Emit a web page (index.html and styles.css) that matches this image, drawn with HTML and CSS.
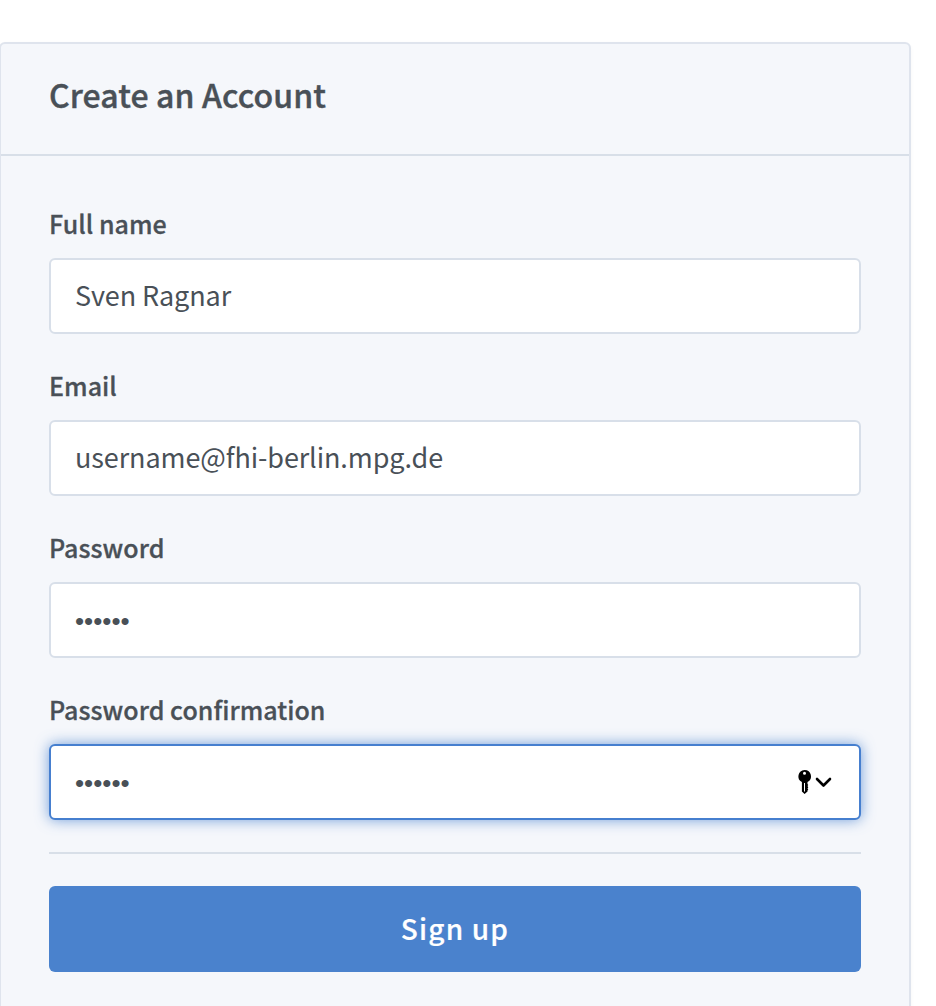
FILE: index.html
```html
<!DOCTYPE html>
<html lang="en">
<head>
    <meta charset="UTF-8">
    <meta name="viewport" content="width=device-width, initial-scale=1.0">
    <title>Create an Account</title>
    <link rel="stylesheet" href="styles.css">
</head>
<body>
    <div class="card">
        <div class="card-header">
            <h1>Create an Account</h1>
        </div>
        <form class="card-body">
            <div class="form-group">
                <label for="name">Full name</label>
                <input type="text" id="name" value="Sven Ragnar">
            </div>

            <div class="form-group">
                <label for="email">Email</label>
                <input type="text" id="email" value="username@fhi-berlin.mpg.de">
            </div>

            <div class="form-group">
                <label for="password">Password</label>
                <input type="password" id="password" value="secret">
            </div>

            <div class="form-group">
                <label for="confirmation">Password confirmation</label>
                <div class="input-wrap">
                    <input class="focused" type="password" id="confirmation" value="secret">
                    <svg class="key-icon" width="36" height="26" viewBox="0 0 36 26">
                        <path fill-rule="evenodd" d="M7.5 1a6.4 6.4 0 0 1 3 12.1V15l.8 1-.8 1 .8 1.2-.8 1.2.8 1.2-.8 1v1L7.6 25 4.9 22.6v-9.5A6.4 6.4 0 0 1 7.5 1zM7.5 2.8a1.5 1.5 0 1 0 0 3 1.5 1.5 0 0 0 0-3zM7 14v8.5h1V14z"/>
                        <path class="chevron" d="M20 10l6.5 6.5L33 10"/>
                    </svg>
                </div>
            </div>

            <hr>
            <button type="button">Sign up</button>
        </form>
    </div>
</body>
</html>
```

FILE: styles.css
```css
body {
    margin: 0;
    font-family: "Noto Sans CJK SC", "Noto Sans", sans-serif;
    color: #495057;
    background-color: white;
    overflow: hidden;
}
.card {
    box-sizing: border-box;
    width: 912px;
    height: 1000px;
    margin: 42px 0 0 -1px;
    border: 2px solid #dfe4ed;
    border-radius: 6px;
    background-color: #f5f7fb;
    box-shadow: 0 2px 4px rgba(0,0,0,0.04);
}
.card-header {
    box-sizing: border-box;
    height: 112px;
    padding: 26px 48px 0;
    border-bottom: 2px solid #d8dfe8;
}
h1 {
    margin: 0;
    font-size: 32px;
    line-height: 48px;
    font-weight: 500;
    letter-spacing: 0.1px;
    -webkit-text-stroke: 0.4px #495057;
}
.card-body {
    padding: 48px;
}
.form-group {
    margin-bottom: 32px;
}
label {
    display: block;
    height: 54px;
    font-size: 25px;
    line-height: 38px;
    font-weight: 500;
    letter-spacing: 0.04px;
    -webkit-text-stroke: 0.3px #495057;
}
input {
    display: block;
    box-sizing: border-box;
    width: 812px;
    height: 76px;
    padding: 0 24px 4px;
    border: 2px solid #d8dfe9;
    border-radius: 6px;
    outline: none;
    background-color: white;
    color: #495057;
    font-family: inherit;
    font-size: 27px;
    letter-spacing: -0.1px;
}
input[type="password"] {
    padding-top: 2px;
    padding-bottom: 0;
    font-family: "Liberation Sans", sans-serif;
    font-size: 26px;
    letter-spacing: 0;
}
.input-wrap {
    position: relative;
}
.focused {
    border-color: #467fcf;
    box-shadow: 0 0 14px rgba(70,127,207,0.75);
}
.key-icon {
    position: absolute;
    right: 28px;
    top: 25px;
}
.chevron {
    fill: none;
    stroke: black;
    stroke-width: 2.6;
    stroke-linecap: round;
    stroke-linejoin: round;
}
hr {
    margin: 0 0 32px;
    border: none;
    border-top: 2px solid #d8dfe8;
}
button {
    display: block;
    width: 812px;
    height: 86px;
    padding: 0 0 3px;
    border: none;
    border-radius: 6px;
    background-color: #4a82cd;
    color: white;
    font-family: inherit;
    font-size: 28px;
    font-weight: 500;
    letter-spacing: 1.2px;
    -webkit-text-stroke: 0.2px white;
    cursor: pointer;
}
```
